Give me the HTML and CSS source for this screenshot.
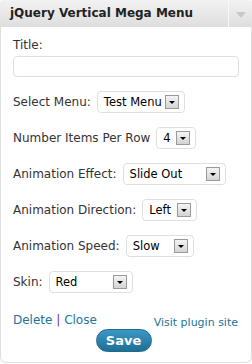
FILE: index.html
```html
<!DOCTYPE html>
<html>
<head>
<meta charset="utf-8">
<link rel="stylesheet" href="styles.css">
</head>
<body>
<div class="widget">
  <div class="head">
    <div class="head-title">jQuery Vertical Mega Menu</div>
    <div class="head-toggle"><span class="tri"></span></div>
  </div>
  <div class="body">
    <div class="lbl">Title:</div>
    <div class="input"></div>
    <div class="row"><span class="lbl">Select Menu:</span><span class="sel" style="width:88px"><span class="val">Test Menu</span><span class="btn"><span class="arr"></span></span></span></div>
    <div class="row"><span class="lbl">Number Items Per Row</span><span class="sel" style="width:40px"><span class="val">4</span><span class="btn"><span class="arr"></span></span></span></div>
    <div class="row"><span class="lbl">Animation Effect:</span><span class="sel" style="width:103px"><span class="val">Slide Out</span><span class="btn"><span class="arr"></span></span></span></div>
    <div class="row"><span class="lbl">Animation Direction:</span><span class="sel" style="width:55px"><span class="val">Left</span><span class="btn"><span class="arr"></span></span></span></div>
    <div class="row"><span class="lbl">Animation Speed:</span><span class="sel" style="width:68px"><span class="val">Slow</span><span class="btn"><span class="arr"></span></span></span></div>
    <div class="row"><span class="lbl">Skin:</span><span class="sel" style="width:84px"><span class="val">Red</span><span class="btn"><span class="arr"></span></span></span></div>
    <div class="foot">
      <div class="links"><a class="lnk">Delete</a> <span class="sep">|</span> <a class="lnk">Close</a></div>
      <a class="visit">Visit plugin site</a>
    </div>
    <div class="save-wrap"><span class="save">Save</span></div>
  </div>
</div>
</body>
</html>
```
FILE: styles.css
```css
html, body { margin: 0; padding: 0; background: #fff; }
body { width: 252px; height: 364px; font-family: "DejaVu Sans", Verdana, sans-serif; }
.widget {
  width: 252px;
  box-sizing: border-box;
  border: 1px solid #dfdfdf;
  border-top: 0;
  border-radius: 4px 4px 6px 6px;
  background: #fff;
  height: 363px;
}
.head {
  height: 27px;
  display: flex;
  background: linear-gradient(#f2f2f2, #dedede);
  border-radius: 4px 4px 0 0;
  margin: 0 -1px;
}
.head-title {
  flex: 1;
  font-weight: bold;
  font-size: 12px;
  color: #222;
  line-height: 27px;
  padding-left: 10px;
  border-right: 1px solid #f8f8f8;
}
.head-toggle {
  width: 23px;
  display: flex;
  align-items: center;
  justify-content: center;
}
.tri {
  width: 0; height: 0;
  border-left: 5px solid transparent;
  border-right: 5px solid transparent;
  border-top: 6px solid #c8c8c8;
  margin-top: 3px;
}
.body { padding: 10px 13px 0 12px; }
.lbl { font-size: 12px; color: #333; line-height: 16px; }
.input {
  height: 21px;
  box-sizing: border-box;
  margin-top: 3px;
  width: 226px;
  border: 1px solid #dfdfdf;
  border-radius: 4px;
  background: #fff;
}
.row { display: flex; align-items: center; gap: 6px; margin-top: 14px; height: 22px; }
.sel {
  height: 22px;
  box-sizing: border-box;
  border: 1px solid #dfdfdf;
  border-radius: 4px;
  display: flex;
  align-items: center;
  justify-content: space-between;
  padding: 0 5px 0 6px;
  background: #fff;
}
.val { font-family: "DejaVu Sans", sans-serif; font-size: 11.5px; color: #000; }
.btn {
  width: 14px; height: 14px;
  box-sizing: border-box;
  border: 1px solid #9a9a9a;
  background: linear-gradient(#f4f4f4, #d4d4d4);
  display: flex; align-items: center; justify-content: center;
}
.arr {
  width: 0; height: 0;
  border-left: 3px solid transparent;
  border-right: 3px solid transparent;
  border-top: 3px solid #000;
  margin-top: 1px;
}
.foot { display: flex; justify-content: space-between; align-items: flex-end; margin-top: 19px; height: 16px; }
.links { font-size: 12px; line-height: 16px; color: #21759b; }
.lnk { color: #21759b; }
.sep { color: #682f8c; }
.visit { font-size: 11px; line-height: 13px; color: #21759b; margin-bottom: -1px; }
.save-wrap { display: flex; justify-content: center; margin-top: 1px; padding-right: 4px; }
.save {
  width: 56px; height: 23px;
  box-sizing: border-box;
  border-radius: 12px;
  background: linear-gradient(#3b98c4, #1f6f94);
  border: 1px solid #1d6a8e;
  color: #fff;
  font-weight: bold;
  font-size: 13px;
  line-height: 21px;
  text-align: center;
}
```
